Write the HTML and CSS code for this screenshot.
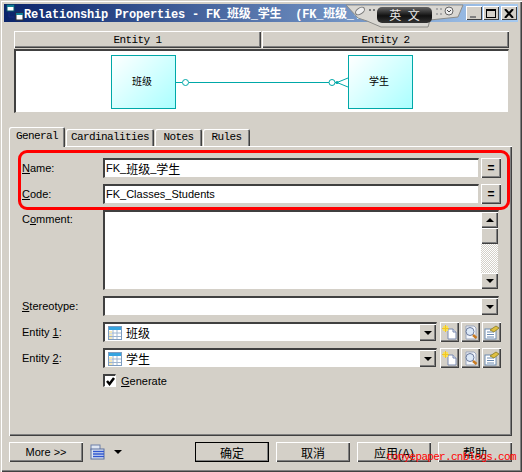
FILE: index.html
```html
<!DOCTYPE html>
<html lang="en">
<head>
  <meta charset="UTF-8" />
  <title>Relationship Properties</title>
  <link rel="stylesheet" href="styles.css">
</head>
<body>
  <div class="window">

    <!-- title bar -->
    <div class="titlebar">
      <svg class="app-icon" width="18" height="18" viewBox="0 0 18 18">
        <rect x="1" y="1" width="7" height="6" fill="#fff" stroke="#0a5a6a"/>
        <rect x="1" y="1" width="7" height="2" fill="#0f7f96"/>
        <path d="M3 8v5h5" fill="none" stroke="#1a2a80"/>
        <rect x="10" y="9" width="7" height="7" fill="#fff" stroke="#333"/>
        <rect x="10" y="9" width="7" height="2" fill="#0f7f96"/>
      </svg>
      <span class="title-text">Relationship Properties - FK_班级_学生&nbsp; (FK_班级_学生)</span>
      <div class="win-buttons">
        <span class="win-btn"><i class="min-mark"></i></span>
        <span class="win-btn"><i class="max-mark"></i></span>
        <span class="win-btn">
          <svg width="10" height="9" viewBox="0 0 10 9"><path d="M1 0l8 9M9 0L1 9" stroke="#000" stroke-width="2"/></svg>
        </span>
      </div>
    </div>

    <!-- entity header + diagram -->
    <div class="entity-head">
      <div class="head-btn">Entity 1</div>
      <div class="head-btn">Entity 2</div>
    </div>
    <div class="diagram">
      <div class="entity-box">班级</div>
      <svg class="link" width="172" height="54" viewBox="0 0 172 54">
        <path d="M0 27.5h6M13 27.5h140" stroke="#00a8a8" fill="none"/>
        <circle cx="9.5" cy="27.5" r="3" fill="#fff" stroke="#00a8a8"/>
        <circle cx="156" cy="27.5" r="3" fill="#fff" stroke="#00a8a8"/>
        <path d="M159 27.5h3M161 27.5l11-4.5M161 27.500l11 4.500" stroke="#00a8a8" fill="none"/>
        <circle cx="161" cy="27.5" r="1.5" fill="#00a8a8"/>
      </svg>
      <div class="entity-box">学生</div>
    </div>

    <!-- tabs -->
    <div class="tabs">
      <span class="tab active">General</span>
      <span class="tab">Cardinalities</span>
      <span class="tab">Notes</span>
      <span class="tab">Rules</span>
    </div>

    <div class="panel">
      <div class="row">
        <label><u>N</u>ame:</label>
        <div class="input grow">FK_<span class="cjk">班级</span>_<span class="cjk">学生</span></div>
        <div class="btn eq">=</div>
      </div>
      <div class="row">
        <label><u>C</u>ode:</label>
        <div class="input grow">FK_Classes_Students</div>
        <div class="btn eq">=</div>
      </div>
      <div class="row comment-row">
        <label>C<u>o</u>mment:</label>
        <div class="input grow comment short">
          <div class="scrollbar">
            <div class="btn sb-btn"><i class="arrow up"></i></div>
            <div class="btn sb-thumb"></div>
            <div class="sb-track"></div>
            <div class="btn sb-btn"><i class="arrow"></i></div>
          </div>
        </div>
      </div>
      <div class="row">
        <label><u>S</u>tereotype:</label>
        <div class="input grow combo short">
          <div class="btn drop"><i class="arrow"></i></div>
        </div>
      </div>
      <div class="row">
        <label>Entity <u>1</u>:</label>
        <div class="input grow combo">
          <svg class="tbl-icon" width="14" height="14" viewBox="0 0 14 14"><use href="#tbl"/></svg>
          <span class="cjk">班级</span>
          <div class="btn drop"><i class="arrow"></i></div>
        </div>
        <div class="tools">
          <div class="btn tool"><svg width="15" height="15" viewBox="0 0 15 15"><use href="#ico-new"/></svg></div>
          <div class="btn tool"><svg width="15" height="15" viewBox="0 0 15 15"><use href="#ico-find"/></svg></div>
          <div class="btn tool"><svg width="15" height="15" viewBox="0 0 15 15"><use href="#ico-prop"/></svg></div>
        </div>
      </div>
      <div class="row">
        <label>Entity <u>2</u>:</label>
        <div class="input grow combo">
          <svg class="tbl-icon" width="14" height="14" viewBox="0 0 14 14"><use href="#tbl"/></svg>
          <span class="cjk">学生</span>
          <div class="btn drop"><i class="arrow"></i></div>
        </div>
        <div class="tools">
          <div class="btn tool"><svg width="15" height="15" viewBox="0 0 15 15"><use href="#ico-new"/></svg></div>
          <div class="btn tool"><svg width="15" height="15" viewBox="0 0 15 15"><use href="#ico-find"/></svg></div>
          <div class="btn tool"><svg width="15" height="15" viewBox="0 0 15 15"><use href="#ico-prop"/></svg></div>
        </div>
      </div>
      <div class="check-row">
        <span class="checkbox">
          <svg width="9" height="9" viewBox="0 0 9 9"><path d="M1 4l2.500 3L8 1" fill="none" stroke="#000" stroke-width="2.500"/></svg>
        </span>
        <span><u>G</u>enerate</span>
      </div>
    </div>

    <!-- bottom buttons -->
    <div class="footer">
      <div class="btn foot-btn">More &gt;&gt;</div>
      <svg class="list-icon" width="15" height="16" viewBox="0 0 15 16">
        <rect x="1" y="1" width="9" height="5" fill="#dfe6f2" stroke="#6d7fa8"/>
        <rect x="1" y="5" width="13" height="10" fill="#dfe6f2" stroke="#5a6f9e"/>
        <path d="M3 7.500h11M3 10h11M3 12.500h11" stroke="#2f55d0" stroke-width="1.400"/>
      </svg>
      <i class="arrow foot-arrow"></i>
      <div class="foot-right">
        <div class="btn foot-btn cjk default">确定</div>
        <div class="btn foot-btn cjk">取消</div>
        <div class="btn foot-btn cjk">应用(A)</div>
        <div class="btn foot-btn cjk">帮助</div>
      </div>
    </div>

    <!-- things lying over the dialog -->
    <div class="highlight"></div>
    <div class="ime">
      <svg class="ime-body" width="120" height="24" viewBox="0 0 120 24">
        <path d="M1 1h117l-5 12-28 3-2 7H36l-14-6-9-3z" fill="#d9d7d2" stroke="#8c8c88"/>
        <ellipse cx="15" cy="7" rx="5" ry="3" transform="rotate(-35 15 7)" fill="#eee" stroke="#777"/>
        <path d="M24 6h2M28 6h2" stroke="#777" stroke-width="2"/>
        <circle cx="104" cy="7" r="4" fill="#eee" stroke="#666"/>
        <path d="M102 6l2 2 2-2" fill="none" stroke="#444"/>
        <path d="M91 5h2M95 5h2M91 10h2M95 10h2" stroke="#aaa" stroke-width="2"/>
      </svg>
      <span class="ime-text">英 文</span>
    </div>
    <div class="watermark">tonyepaper.cnblogs.com</div>
  </div>

  <!-- shared icons -->
  <svg class="defs" width="0" height="0">
    <defs>
      <g id="tbl">
        <rect x="0.5" y="0.5" width="13" height="13" fill="#fff" stroke="#7d9cc0"/>
        <rect x="1" y="1" width="12" height="3" fill="#35a4e0"/>
        <path d="M1 7h12M1 10.500h12M5 4v9M9 4v9" stroke="#9db4cf"/>
        <path d="M1 5h3v2H1zM1 8h3v2H1zM1 11h3v2H1z" fill="#f4e7b8"/>
      </g>
      <g id="ico-new">
        <path d="M6 4h5l3 3v7H6z" fill="#fff" stroke="#7a8ab0"/>
        <path d="M11 4v3h3" fill="#dfe6f2" stroke="#7a8ab0"/>
        <rect x="1" y="1" width="5" height="5" fill="#f6e05a"/>
        <path d="M3.500 0v7M0 3.500h7" stroke="#f2c522"/>
      </g>
      <g id="ico-find">
        <path d="M3 1h8l2 2v11H3z" fill="#f4f6fa" stroke="#9aa6bd"/>
        <circle cx="7" cy="6.500" r="4" fill="#dce8f6" stroke="#6a7a9c"/>
        <path d="M10 10l3.500 3" stroke="#c87a20" stroke-width="2.500"/>
      </g>
      <g id="ico-prop">
        <rect x="1" y="4" width="11" height="10" fill="#fff" stroke="#6a8ab0"/>
        <path d="M3 7h7M3 9.500h7M3 12h7" stroke="#6a8ab0"/>
        <path d="M6 5l6-4 3 2-5 4z" fill="#e0c040" stroke="#9a8a30"/>
      </g>
    </defs>
  </svg>
</body>
</html>
```

FILE: styles.css
```css
/* whole dialog, classic grey theme */
body {
  margin: 0;
  background: #d4d0c8;
  font-family: "Liberation Sans", "Noto Sans CJK SC", sans-serif;
  font-size: 11px;
  color: #000;
}

.cjk {
  font-size: 12px;
}

.window {
  position: relative;
  width: 522px;
  height: 472px;
  box-sizing: border-box;
  padding: 4px 4px 0;
  overflow: hidden;
  background: #d4d0c8;
  box-shadow: inset 1px 1px 0 #d4d0c8, inset 2px 2px 0 #fff, inset -1px -1px 0 #404040, inset -2px -2px 0 #808080;
}

/* title bar */
.titlebar {
  display: flex;
  align-items: center;
  height: 18px;
  padding-left: 2px;
  background: linear-gradient(to right, #0a246a, #a6caf0);
  color: #fff;
}

.app-icon {
  flex: none;
}

.title-text {
  flex: 1;
  min-width: 0;
  white-space: nowrap;
  overflow: hidden;
  font-family: "Liberation Mono", "Noto Sans CJK SC", monospace;
  font-weight: bold;
  font-size: 12px;
  letter-spacing: -0.2px;
}

.win-buttons {
  display: flex;
  flex: none;
  gap: 1px;
  margin-right: 1px;
}

.win-btn {
  display: flex;
  align-items: center;
  justify-content: center;
  width: 16px;
  height: 14px;
  background: #d4d0c8;
  box-shadow: inset 1px 1px 0 #fff, inset -1px -1px 0 #404040;
}

.win-btn:nth-child(2) {
  margin-right: 1px;
}

.min-mark {
  width: 6px;
  height: 2px;
  background: #808080;
  margin: 7px 3px 0 0;
}

.max-mark {
  box-sizing: border-box;
  width: 10px;
  height: 9px;
  border: 1px solid #000;
  border-top-width: 2px;
}

/* entity header */
.entity-head {
  display: flex;
  gap: 1px;
  margin: 9px 9px 0 10px;
  height: 17px;
}

.head-btn {
  flex: 1;
  display: flex;
  align-items: center;
  justify-content: center;
  font-family: "Liberation Mono", monospace;
  font-size: 11px;
  letter-spacing: -0.6px;
  box-shadow: inset 1px 1px 0 #fff, inset -1px -1px 0 #404040, inset -2px -2px 0 #808080;
}

/* the little diagram */
.diagram {
  display: flex;
  align-items: center;
  justify-content: center;
  height: 64px;
  margin: 1px 9px 0 10px;
  box-sizing: border-box;
  background: #fff;
  border: 1px solid #fff;
  border-top: 2px solid #404040;
  border-left: 2px solid #404040;
  border-bottom-color: #d4d0c8;
  border-right-color: #d4d0c8;
}

.entity-box {
  box-sizing: border-box;
  width: 65px;
  height: 54px;
  display: flex;
  align-items: center;
  justify-content: center;
  padding: 0 3px 2px 0;
  border: 1px solid #00a8a8;
  background: linear-gradient(135deg, #fff, #aaffff);
  font-size: 10px;
  flex: none;
}

.link {
  flex: none;
}

/* tabs */
.tabs {
  display: flex;
  align-items: flex-end;
  height: 20px;
  margin: 13px 0 0 5px;
  padding-left: 2px;
  position: relative;
  z-index: 1;
}

.tab {
  box-sizing: border-box;
  min-width: 47px;
  height: 17px;
  line-height: 17px;
  padding: 0 5px;
  text-align: center;
  font-family: "Liberation Mono", monospace;
  font-size: 11px;
  letter-spacing: -0.6px;
  box-shadow: inset 1px 1px 0 #fff, inset -1px 0 0 #404040, inset -2px 0 0 #808080;
  margin-right: 1px;
  border-radius: 2px 2px 0 0;
}

.tab.active {
  height: 20px;
  line-height: 18px;
  margin-left: -2px;
  margin-bottom: -1px;
  padding: 0 7px;
  background: #d4d0c8;
}

/* main tab page */
.panel {
  box-sizing: border-box;
  height: 290px;
  margin: 0 6px 0 5px;
  padding: 12px 11px 0 13px;
  box-shadow: inset 1px 1px 0 #fff, inset -1px -1px 0 #404040, inset -2px -2px 0 #808080;
}

.row {
  display: flex;
  align-items: center;
  height: 20px;
  margin-bottom: 6px;
}

.row label {
  flex: none;
  width: 81px;
}

.grow {
  flex: 1;
  min-width: 0;
}

.input {
  box-sizing: border-box;
  position: relative;
  display: flex;
  align-items: center;
  height: 100%;
  padding: 0 2px 1px 1px;
  background: #fff;
  border: 1px solid #fff;
  border-top: 2px solid #404040;
  border-left: 2px solid #404040;
  border-bottom-color: #d4d0c8;
  border-right-color: #d4d0c8;
  white-space: nowrap;
}

.short {
  margin-right: 2px;
}

.btn {
  box-sizing: border-box;
  flex: none;
  display: flex;
  align-items: center;
  justify-content: center;
  background: #d4d0c8;
  box-shadow: inset 1px 1px 0 #fff, inset -1px -1px 0 #404040, inset -2px -2px 0 #808080;
}

.eq {
  width: 20px;
  height: 20px;
  margin-left: 2px;
  font-size: 12px;
  font-weight: bold;
}

/* comment box and its scrollbar */
.comment-row {
  height: 80px;
  align-items: flex-start;
}

.comment {
  height: 80px;
  justify-content: flex-end;
  padding: 0;
}

.comment-row label {
  margin-top: 3px;
}

.scrollbar {
  width: 17px;
  height: 77px;
  display: flex;
  flex-direction: column;
}

.sb-btn {
  height: 16px;
}

.sb-thumb {
  height: 16px;
}

.sb-track {
  flex: 1;
  background: repeating-conic-gradient(#fff 0 25%, #d4d0c8 0 50%) 0 0 / 2px 2px;
}

.arrow {
  display: block;
  width: 0;
  height: 0;
  border-left: 4px solid transparent;
  border-right: 4px solid transparent;
  border-top: 4px solid #000;
}

.arrow.up {
  border-top: 0;
  border-bottom: 4px solid #000;
}

/* combo boxes */
.combo {
  gap: 4px;
  padding: 0 0 0 3px;
  justify-content: flex-start;
}

.drop {
  margin-left: auto;
  width: 17px;
  height: 17px;
}

.tbl-icon {
  flex: none;
}

.tools {
  display: flex;
  flex: none;
  gap: 2px;
  margin-left: 3px;
}

.tool {
  width: 19px;
  height: 20px;
}

.defs {
  position: absolute;
}

/* generate checkbox */
.check-row {
  display: flex;
  align-items: center;
  gap: 5px;
  margin: 3px 0 0 81px;
}

.checkbox {
  box-sizing: border-box;
  display: flex;
  align-items: center;
  justify-content: center;
  width: 13px;
  height: 13px;
  background: #fff;
  border: 1px solid #fff;
  border-top: 2px solid #404040;
  border-left: 2px solid #404040;
}

/* bottom row */
.footer {
  display: flex;
  align-items: center;
  height: 20px;
  margin: 6px 6px 0 5px;
}

.foot-btn {
  width: 74px;
  height: 20px;
}

.list-icon {
  margin-left: 7px;
}

.foot-arrow {
  margin-left: 9px;
}

.foot-right {
  display: flex;
  gap: 7px;
  margin-left: auto;
}

.default {
  outline: 1px solid #000;
  outline-offset: -1px;
}

/* red marker drawn over the name and code rows */
.highlight {
  position: absolute;
  left: 18px;
  top: 150px;
  width: 492px;
  height: 60px;
  box-sizing: border-box;
  border: 3px solid #f00;
  border-radius: 9px;
}

/* floating language bar */
.ime {
  position: absolute;
  left: 345px;
  top: 4px;
  width: 120px;
  height: 24px;
}

.ime-body {
  display: block;
}

.ime-text {
  position: absolute;
  left: 32px;
  top: 3px;
  width: 55px;
  height: 16px;
  line-height: 16px;
  text-align: center;
  font-family: "Noto Sans CJK SC", sans-serif;
  font-size: 12px;
  word-spacing: 4px;
  color: #e8e8e8;
  background: linear-gradient(#666, #111 55%, #333);
  border-radius: 5px;
}

/* site watermark */
.watermark {
  position: absolute;
  left: 386px;
  top: 451px;
  font-family: "Liberation Mono", monospace;
  font-size: 11px;
  letter-spacing: -0.7px;
  color: #f00;
}
```
